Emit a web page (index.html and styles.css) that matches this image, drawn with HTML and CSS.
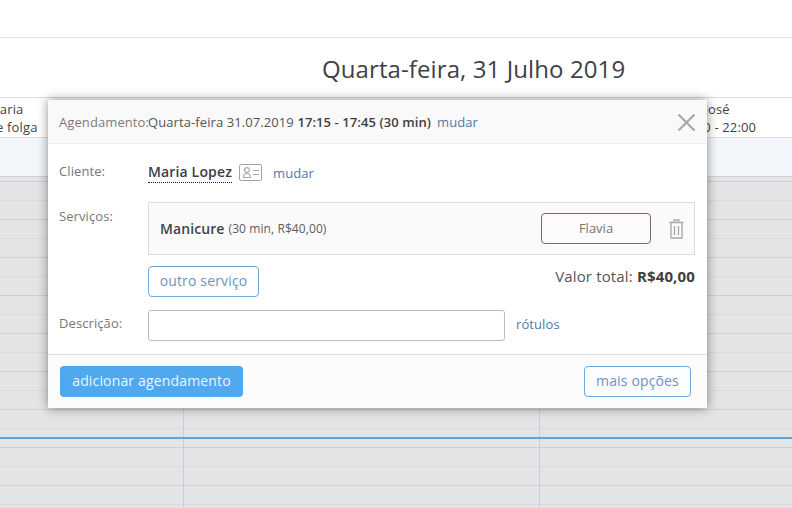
FILE: index.html
```html
<!DOCTYPE html>
<html lang="pt">
<head>
<meta charset="utf-8">
<title>Agendamento</title>
<link rel="stylesheet" href="styles.css">
</head>
<body>
<div class="page">
  <div class="topbar"></div>
  <h1 class="day-title">Quarta-feira, 31 Julho 2019</h1>
  <div class="col-heads">
    <div class="col-head first"><div>Maria</div><div>de folga</div></div>
    <div class="col-head"></div>
    <div class="col-head last"><div>Ana José</div><div>10:00 - 22:00</div></div>
  </div>
  <div class="all-day"></div>
  <div class="grid">
    <div class="grid-col c1"></div>
    <div class="grid-col c2"></div>
    <div class="grid-col c3"></div>
  </div>
  <div class="now-line"></div>

  <div class="modal">
    <div class="modal-head">
      <span class="head-label">Agendamento:</span><span class="head-date">Quarta-feira 31.07.2019 <b>17:15 - 17:45 (30 min)</b></span>
      <a class="link head-link">mudar</a>
      <svg class="close" width="19" height="19" viewBox="0 0 19 19"><path d="M1.5 1.5 17.5 17.5M17.5 1.5 1.5 17.5" stroke="#a8a8a8" stroke-width="2.2" fill="none"/></svg>
    </div>
    <div class="modal-body">
      <div class="row client-row">
        <span class="label">Cliente:</span>
        <span class="client-name">Maria Lopez</span>
        <svg class="card-icon" width="23" height="17" viewBox="0 0 23 17"><rect x=".5" y=".5" width="22" height="16" rx="1.5" fill="none" stroke="#a5a5a5"/><circle cx="8" cy="6" r="2.4" fill="none" stroke="#adadad" stroke-width="1.2"/><path d="M4.5 13.5c0-3 1.5-4 3.500-4s3.500 1 3.500 4z" fill="none" stroke="#adadad" stroke-width="1.2"/><path d="M14 6.500h6M14 10.500h6" stroke="#a5a5a5" stroke-width="1.200"/></svg>
        <a class="link client-link">mudar</a>
      </div>
      <div class="row service-row">
        <span class="label">Serviços:</span>
        <div class="service-box">
          <span class="service-name">Manicure</span>
          <span class="service-meta">(30 min, R$40,00)</span>
          <button class="staff-btn">Flavia</button>
          <svg class="trash" width="15" height="20" viewBox="0 0 15 20"><path d="M5 2.500V1h5v1.500M.5 3.500h14M2 3.500V19h11V3.500M5.500 7v9M9.500 7v9" fill="none" stroke="#a8a8a8" stroke-width="1.300"/></svg>
        </div>
      </div>
      <div class="row total-row">
        <button class="outline-btn another">outro serviço</button>
        <span class="total">Valor total: <b>R$40,00</b></span>
      </div>
      <div class="row desc-row">
        <span class="label">Descrição:</span>
        <input class="desc-input" type="text">
        <a class="link desc-link">rótulos</a>
      </div>
    </div>
    <div class="modal-foot">
      <button class="primary-btn">adicionar agendamento</button>
      <button class="outline-btn more">mais opções</button>
    </div>
  </div>
</div>
</body>
</html>
```

FILE: styles.css
```css
html, body { margin: 0; padding: 0; }
body {
  width: 792px;
  height: 508px;
  overflow: hidden;
  background: #fff;
  font-family: "Open Sans", sans-serif;
  color: #444;
}
.page { position: relative; width: 792px; height: 508px; overflow: hidden; display: flex; flex-direction: column; }
.topbar { height: 37px; border-bottom: 1px solid #e2e2e2; flex: none; }
.day-title {
  margin: 0;
  height: 60px;
  flex: none;
  box-sizing: border-box;
  padding: 14px 0 0 322px;
  font-size: 24px;
  line-height: 33px;
  font-weight: 400;
  letter-spacing: .1px;
  color: #3d4248;
  border-bottom: 1px solid #dcdcdc;
}
.col-heads { display: grid; grid-template-columns: 183px 356px 1fr; height: 39px; flex: none; border-bottom: 1px solid #dedede; font-size: 13px; line-height: 18px; color: #3f3f3f; letter-spacing: .15px; }
.col-head { padding-top: 2px; }
.col-head.first { margin-left: -12px; }
.col-head.last { padding-left: 138px; }
.all-day { height: 38px; flex: none; background: #f3f7fc; border-bottom: 1px solid #cfd1d4; }
.grid {
  flex: 1;
  display: grid;
  grid-template-columns: 184px 356px 1fr;
  background-color: #e2e4e6;
  background-image: linear-gradient(to bottom, transparent 0, transparent 4px, #cfd0d2 4px, #cfd0d2 5px, transparent 5px, transparent 23px, #d9dadc 23px, #d9dadc 24px, transparent 24px);
  background-size: 100% 38px;
}
.grid-col { border-right: 1px solid #cccdd0; }
.grid-col.c3 { border-right: 0; }
.now-line { position: absolute; left: 0; right: 0; top: 437px; height: 2px; background: #5fa5da; }

.modal {
  position: absolute;
  left: 48px;
  top: 100px;
  width: 659px;
  height: 308px;
  background: #fff;
  display: flex;
  flex-direction: column;
  box-shadow: 0 0 10px rgba(0,0,0,.45);
  font-size: 13px;
  color: #666;
  letter-spacing: .09px;
}
.link { color: #4f78ab; font-size: 13px; }
.modal-head {
  position: relative;
  height: 44px;
  box-sizing: border-box;
  flex: none;
  background: #f9f9f9;
  border-bottom: 1px solid #eeeeee;
  display: flex;
  align-items: center;
  padding: 0 0 0 11px;
  white-space: nowrap;
}
.head-label { width: 89px; color: #7c7c7c; flex: none; overflow: visible; }
.head-date { color: #555; }
.head-date b { font-weight: 600; color: #3f3f3f; }
.head-link { margin-left: 6px; }
.close { position: absolute; right: 11px; top: 13px; }
.modal-body { flex: 1; padding: 0 12px 0 11px; position: relative; }
.row { display: flex; }
.label { width: 89px; flex: none; color: #777; }
.client-row { height: 58px; padding-top: 18px; box-sizing: border-box; align-items: flex-start; }
.client-name { font-size: 14px; font-weight: 600; letter-spacing: .15px; color: #3a4048; line-height: 20px; border-bottom: 1px dotted #222; height: 20px; }
.client-row .label { line-height: 18px; }
.card-icon { margin: 2px 0 0 7px; }
.client-link { margin: 2px 0 0 11px; line-height: 18px; }
.service-row { height: 64px; }
.service-row .label { line-height: 18px; padding-top: 5px; }
.service-box {
  flex: 1;
  height: 53px;
  box-sizing: border-box;
  display: flex;
  align-items: center;
  background: #fafafa;
  border: 1px solid #dcdcdc;
  padding: 0 10px 0 11px;
}
.service-name { font-size: 14px; font-weight: 600; color: #3f444a; }
.service-meta { font-size: 12px; color: #5c5c5c; margin-left: 4px; }
.staff-btn {
  margin-left: auto;
  width: 110px;
  height: 31px;
  background: #fcfafa;
  border: 1px solid #7d6a6e;
  border-radius: 4px;
  font: 13px "Open Sans", sans-serif;
  color: #777;
  padding: 0 0 2px;
}
.trash { margin-left: 18px; }
.total-row { height: 44px; padding-left: 89px; justify-content: space-between; align-items: flex-start; }
.outline-btn {
  height: 31px;
  box-sizing: border-box;
  background: #fff;
  border: 1px solid #69a9de;
  border-radius: 4px;
  font: 14px "Open Sans", sans-serif;
  letter-spacing: .15px;
  color: #6e93c2;
  padding: 0 0 2px;
}
.another { width: 111px; }
.total { font-size: 15px; line-height: 21px; color: #555; letter-spacing: .15px; }
.total b { font-weight: 700; color: #3f3f3f; }
.desc-row { height: 44px; align-items: flex-start; }
.desc-row .label { line-height: 18px; padding-top: 4px; }
.desc-input {
  width: 357px;
  height: 31px;
  box-sizing: border-box;
  border: 1px solid #bdbdbd;
  border-radius: 3px;
  background: #fff;
  margin: 0;
}
.desc-link { margin: 5px 0 0 11px; line-height: 18px; }
.modal-foot {
  height: 54px;
  box-sizing: border-box;
  flex: none;
  background: #fbfbfb;
  border-top: 1px solid #dfdcdc;
  display: flex;
  justify-content: space-between;
  align-items: flex-start;
  padding: 11px 16px 0 12px;
}
.primary-btn {
  height: 31px;
  width: 183px;
  background: #50a9ef;
  border: 0;
  border-radius: 4px;
  font: 14px "Open Sans", sans-serif;
  letter-spacing: .16px;
  color: #eaf5ff;
  padding: 0 0 2px;
}
.more { width: 107px; background: #fcfdff; }
```
